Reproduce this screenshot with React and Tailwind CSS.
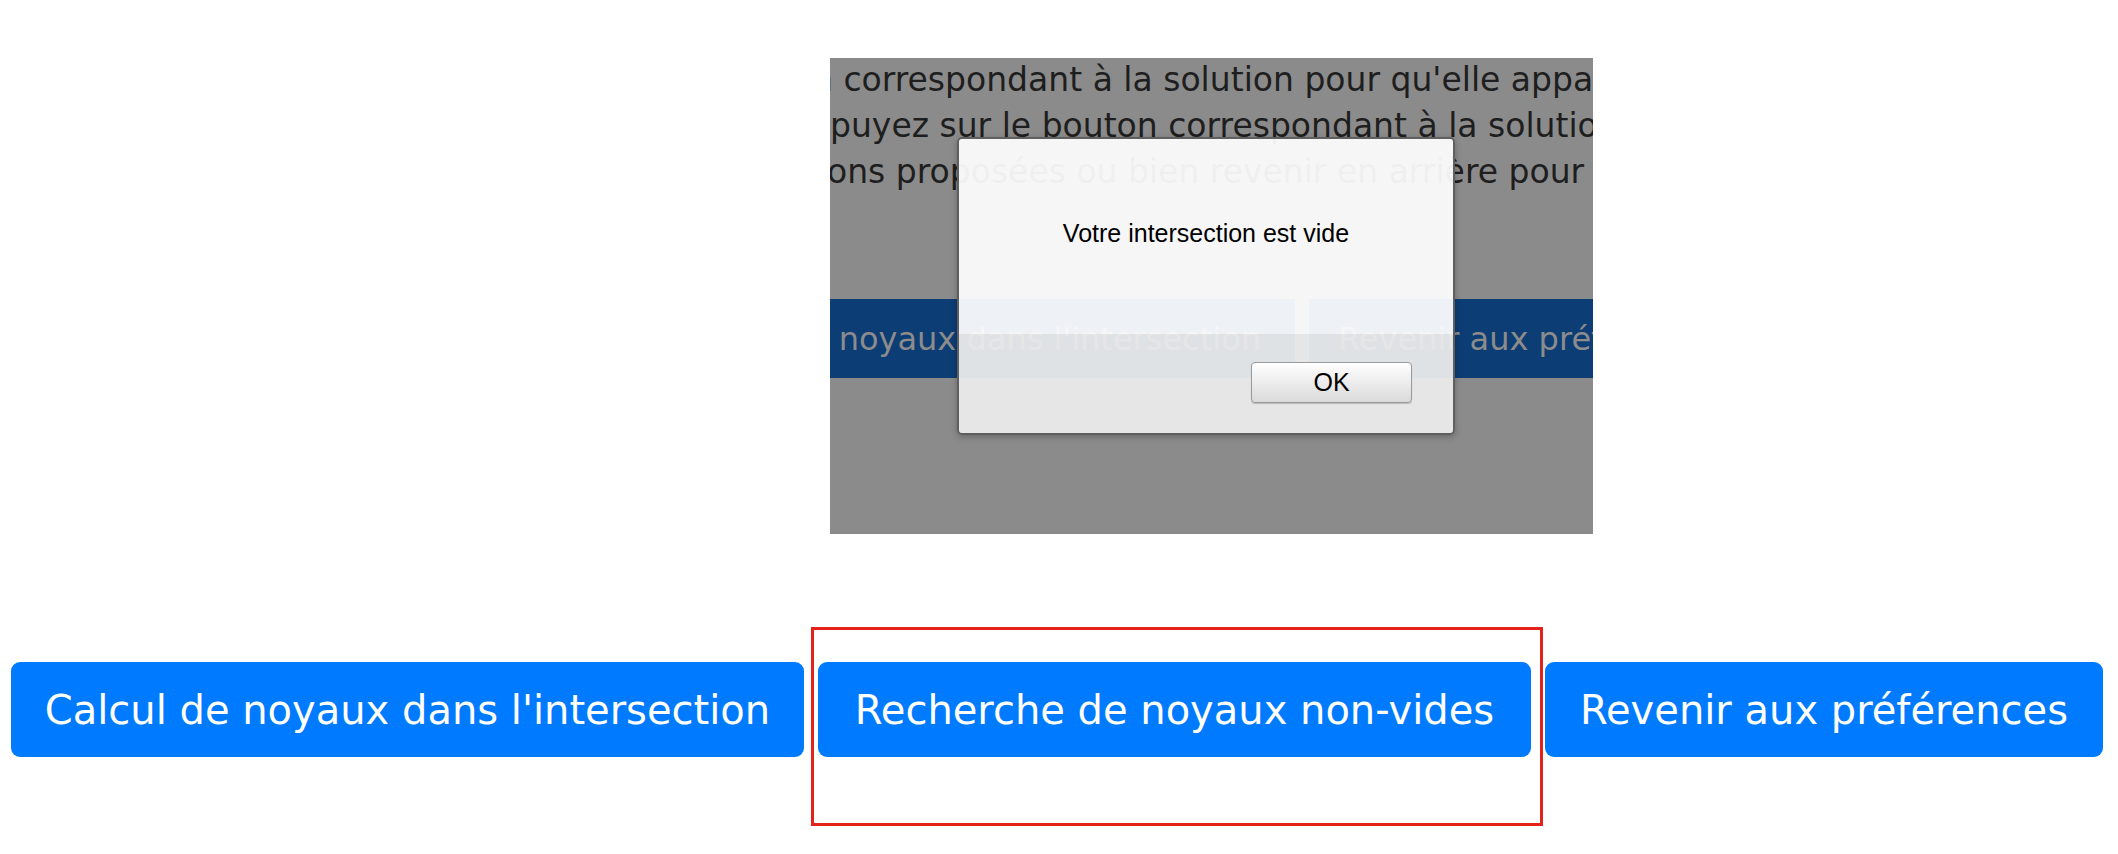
export default function App() {
  return (
    <div className="relative h-[854px] w-full overflow-hidden bg-white font-['DejaVu_Sans',Verdana,sans-serif]">
      {/* screenshot of the page with the alert */}
      <div className="pl-[830px] pt-[58px]">
        <div className="relative h-[476px] w-[763px] overflow-hidden bg-[#8b8b8b]">
          <div className="-mt-[1px] whitespace-nowrap text-[33px] leading-[46px] text-[#1e1e1e]">
            <p className="-ml-[18px]">n correspondant à la solution pour qu'elle apparaisse</p>
            <p>puyez sur le bouton correspondant à la solution</p>
            <p className="-ml-[3px]">ons proposées ou bien revenir en arrière pour</p>
          </div>

          <div className="mt-[104px] flex h-[79px] gap-[14px] whitespace-nowrap text-[32px] text-[#8c8c8c]">
            <div className="flex w-[465px] shrink-0 items-center justify-end overflow-hidden bg-[#0c3d74] pr-[34px]">
              <span>Calcul de noyaux dans l'intersection</span>
            </div>
            <div className="flex flex-1 items-center overflow-hidden bg-[#0c3d74] pl-[29px]">
              <span>Revenir aux préférences</span>
            </div>
          </div>

          <div className="absolute left-[127px] top-[79px] flex h-[298px] w-[498px] flex-col overflow-hidden rounded-[5px] border-2 border-[#5f5f5f] font-['Liberation_Sans',Arial,sans-serif] shadow-[0_2px_6px_rgba(0,0,0,0.25)]">
            <div className="h-[195px] bg-[#fdfdfd]/94 pt-[80px] text-center text-[25px] leading-[28px] text-black">
              Votre intersection est vide
            </div>
            <div className="flex flex-1 items-start justify-end bg-[#ebebeb]/95 pr-[41px] pt-[28px]">
              <button className="h-[41px] w-[161px] rounded-[4px] border border-[#9a9a9a] bg-linear-to-b from-white to-[#dadada] text-[25px] leading-none text-black shadow-[0_1px_1px_rgba(0,0,0,0.2)]">
                OK
              </button>
            </div>
          </div>
        </div>
      </div>

      {/* action buttons */}
      <div className="mt-[128px] flex gap-[14px] pl-[11px] text-[40px] text-white">
        <button className="flex h-[95px] w-[793px] items-center justify-center whitespace-nowrap rounded-[9px] bg-[#007bff]">
          Calcul de noyaux dans l'intersection
        </button>
        <button className="flex h-[95px] w-[713px] items-center justify-center whitespace-nowrap rounded-[9px] bg-[#007bff]">
          Recherche de noyaux non-vides
        </button>
        <button className="flex h-[95px] w-[558px] items-center justify-center whitespace-nowrap rounded-[9px] bg-[#007bff]">
          Revenir aux préférences
        </button>
      </div>

      {/* annotation frame */}
      <div className="pointer-events-none absolute left-[811px] top-[627px] h-[199px] w-[732px] border-[3px] border-[#e3221c]" />
    </div>
  );
}
